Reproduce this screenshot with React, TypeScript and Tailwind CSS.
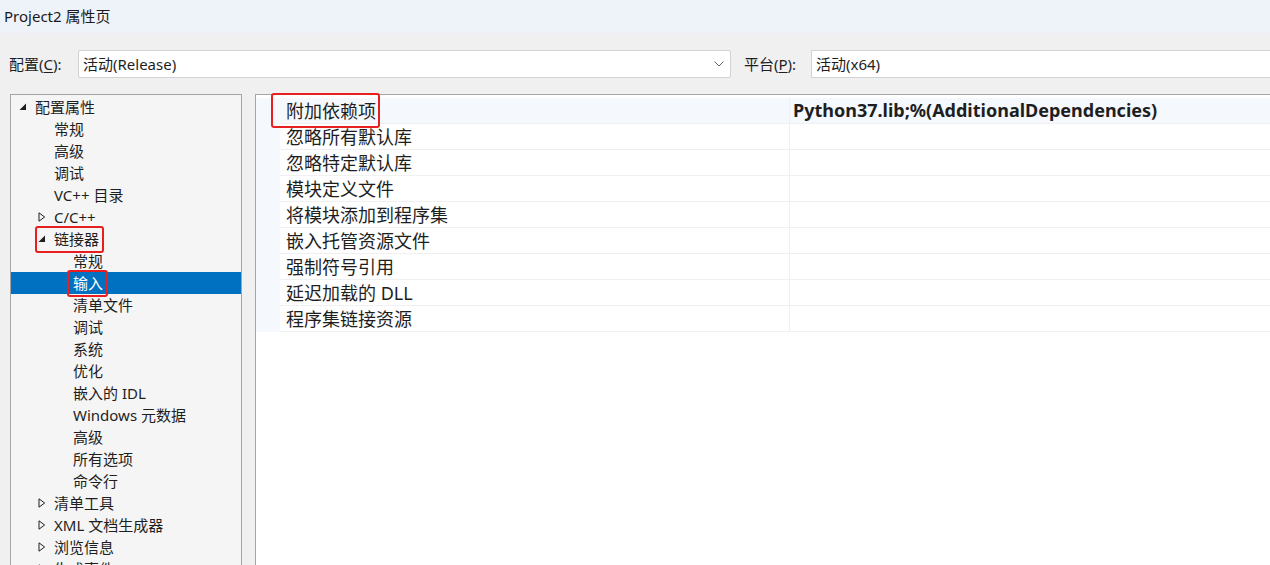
import React from 'react';

type TreeItem = {
  label: string;
  level: 0 | 1 | 2;
  toggle?: 'open' | 'closed';
  selected?: boolean;
  marked?: boolean;
};

const TREE: TreeItem[] = [
  { label: '配置属性', level: 0, toggle: 'open' },
  { label: '常规', level: 1 },
  { label: '高级', level: 1 },
  { label: '调试', level: 1 },
  { label: 'VC++ 目录', level: 1 },
  { label: 'C/C++', level: 1, toggle: 'closed' },
  { label: '链接器', level: 1, toggle: 'open', marked: true },
  { label: '常规', level: 2 },
  { label: '输入', level: 2, selected: true, marked: true },
  { label: '清单文件', level: 2 },
  { label: '调试', level: 2 },
  { label: '系统', level: 2 },
  { label: '优化', level: 2 },
  { label: '嵌入的 IDL', level: 2 },
  { label: 'Windows 元数据', level: 2 },
  { label: '高级', level: 2 },
  { label: '所有选项', level: 2 },
  { label: '命令行', level: 2 },
  { label: '清单工具', level: 1, toggle: 'closed' },
  { label: 'XML 文档生成器', level: 1, toggle: 'closed' },
  { label: '浏览信息', level: 1, toggle: 'closed' },
  { label: '生成事件', level: 1, toggle: 'closed' },
];

const PROPS: { name: string; value?: string }[] = [
  { name: '附加依赖项', value: 'Python37.lib;%(AdditionalDependencies)' },
  { name: '忽略所有默认库' },
  { name: '忽略特定默认库' },
  { name: '模块定义文件' },
  { name: '将模块添加到程序集' },
  { name: '嵌入托管资源文件' },
  { name: '强制符号引用' },
  { name: '延迟加载的 DLL' },
  { name: '程序集链接资源' },
];

const FONT = "font-['Segoe_UI','Noto_Sans','Noto_Sans_CJK_SC',sans-serif]";

function Toggle({ kind, light }: { kind: 'open' | 'closed'; light?: boolean }) {
  const c = light ? '#fff' : '#1e1e1e';
  if (kind === 'open') {
    return (
      <svg width="8" height="8" viewBox="0 0 8 8" className="shrink-0">
        <path d="M7 0.5 L7 7 L0.5 7 Z" fill={c} />
      </svg>
    );
  }
  return (
    <svg width="8" height="10" viewBox="0 0 8 10" className="shrink-0">
      <path d="M1 0.8 L6.6 5 L1 9.2 Z" fill="none" stroke={c} strokeWidth="1" />
    </svg>
  );
}

function TreeRow({ item }: { item: TreeItem }) {
  // text lands at x=35 / 54 / 73 for levels 0 / 1 / 2
  const pad = item.level === 0 ? 'pl-[8px]' : item.level === 1 ? 'pl-[27px]' : 'pl-[62px]';
  const hasSlot = item.level < 2;
  return (
    <div
      className={`h-[22px] flex items-center ${pad} ${
        item.selected ? 'bg-[#0071c1] text-white' : 'text-[#1e1e1e]'
      }`}
    >
      <span className="relative flex items-center">
        {hasSlot ? (
          <span className="w-[16px] flex items-center">
            {item.toggle ? <Toggle kind={item.toggle} light={item.selected} /> : null}
          </span>
        ) : null}
        <span className="leading-none">{item.label}</span>
        {item.marked ? (
          <span
            className={`absolute top-[-6px] bottom-[-6px] right-[-5px] rounded-[3px] border-2 border-[#e81f1f] ${
              item.toggle ? 'left-[-3px]' : 'left-[-6px]'
            }`}
          />
        ) : null}
      </span>
    </div>
  );
}

function Underlined({ pre, key1, post }: { pre: string; key1: string; post: string }) {
  return (
    <span className="whitespace-nowrap text-[#1e1e1e]">
      {pre}
      <span className="underline underline-offset-2">{key1}</span>
      {post}
    </span>
  );
}

export default function App() {
  return (
    <div className={`w-[1270px] h-[565px] overflow-hidden bg-[#f0f0f0] text-[15px] ${FONT}`}>
      {/* title bar */}
      <div className="h-[33px] bg-[#eef2f9] flex items-center pl-[4px] text-[15px] text-[#1a1a1a]">
        Project2 属性页
      </div>

      {/* configuration row */}
      <div className="h-[61px] flex items-start pt-[17px] pl-[9px]">
        <div className="h-[28px] flex items-center w-[69px]">
          <Underlined pre="配置(" key1="C" post="):" />
        </div>
        <div className="w-[653px] h-[28px] bg-white border border-[#d3d3d3] rounded-[2px] flex items-center pl-[4px] pr-[6px]">
          <span className="flex-1 text-[#1e1e1e]">活动(Release)</span>
          <svg width="10" height="6" viewBox="0 0 10 6">
            <path d="M0.5 0.5 L5 5 L9.5 0.5" fill="none" stroke="#606060" strokeWidth="1" />
          </svg>
        </div>
        <div className="h-[28px] flex items-center pl-[13px] w-[80px]">
          <Underlined pre="平台(" key1="P" post="):" />
        </div>
        <div className="flex-1 h-[28px] bg-white border border-[#d3d3d3] border-r-0 flex items-center pl-[4px] text-[#1e1e1e]">
          活动(x64)
        </div>
      </div>

      {/* main area */}
      <div className="flex pl-[10px] h-[471px]">
        {/* tree */}
        <div className="w-[232px] h-full bg-[#f5f5f5] border border-b-0 border-[#a5a5a5] pt-[1px] overflow-hidden">
          {TREE.map((t, i) => (
            <TreeRow key={i} item={t} />
          ))}
        </div>

        {/* property grid */}
        <div className="ml-[13px] flex-1 h-full bg-white border-t border-l border-[#a5a5a5] pt-[3px]">
          {PROPS.map((p, i) => (
            <div
              key={i}
              className={`flex h-[26px] ${i === 0 ? 'bg-[#f5f8fc]' : 'bg-white'}`}
            >
              <div className="w-[24px] bg-[#f5f8fc]" />
              <div className="w-[510px] flex items-center pl-[6px] border-b border-[#f0f0f0] border-r text-[18px] text-[#1e1e1e]">
                <span className="relative leading-none">
                  {p.name}
                  {i === 0 ? (
                    <span className="absolute top-[-9px] bottom-[-8px] left-[-15px] right-[-4px] rounded-[3px] border-2 border-[#e81f1f]" />
                  ) : null}
                </span>
              </div>
              <div className="flex-1 flex items-center pl-[3px] border-b border-[#f0f0f0] text-[18px] font-bold text-[#1e1e1e]">
                {p.value ?? ''}
              </div>
            </div>
          ))}
        </div>
      </div>
    </div>
  );
}
